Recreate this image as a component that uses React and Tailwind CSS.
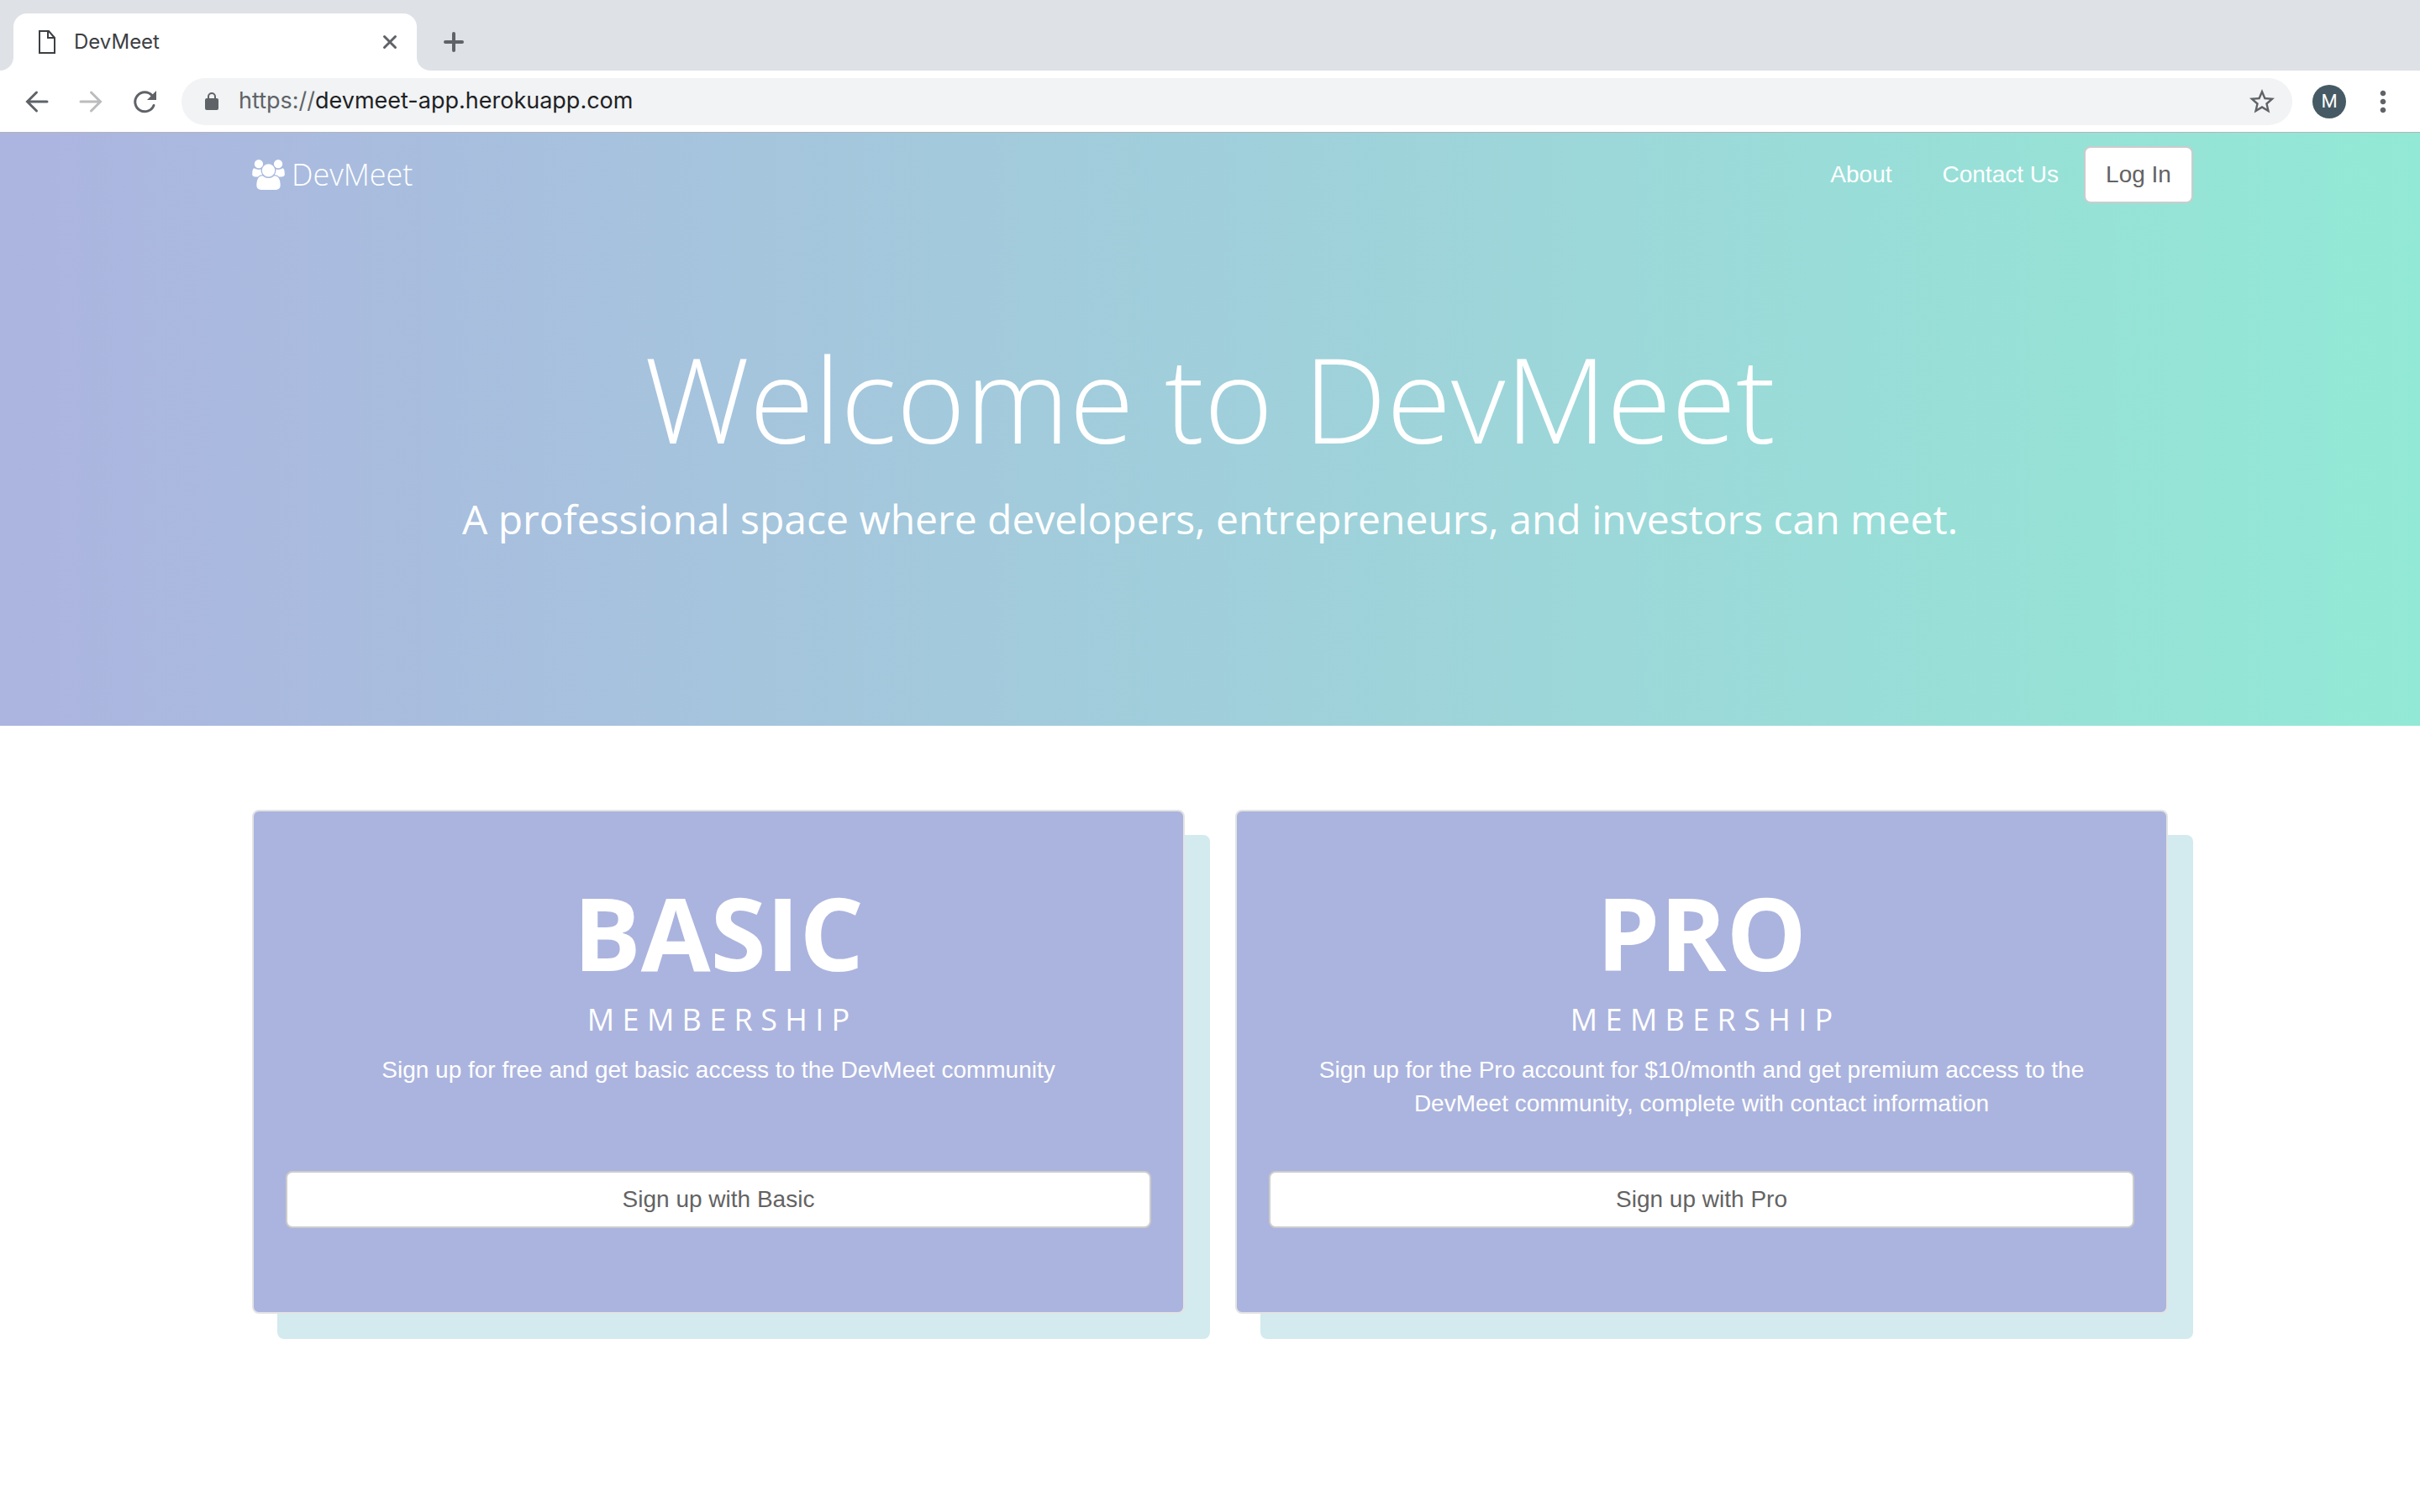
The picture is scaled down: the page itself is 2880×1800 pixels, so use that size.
import React from "react";
import { MdStarBorder, MdMoreVert } from "react-icons/md";

function StrokeIcon({ children, width = 4 }) {
  return (
    <svg viewBox="0 0 40 40" className="size-10" fill="none" stroke="currentColor" strokeWidth={width} strokeLinecap="round" aria-hidden="true">
      {children}
    </svg>
  );
}

function FileIcon() {
  return (
    <svg viewBox="0 0 20 28" className="h-7 w-5" fill="none" stroke="currentColor" strokeWidth="2" aria-hidden="true">
      <path d="M1 1h11l7 8v18H1zM11 1v8h8" />
    </svg>
  );
}

function LockIcon() {
  return (
    <svg viewBox="0 0 24 24" className="size-6" aria-hidden="true">
      <rect x="4" y="8" width="16" height="14" rx="2" fill="currentColor" />
      <path d="M8 9V6a4 4 0 0 1 8 0v3" fill="none" stroke="currentColor" strokeWidth="2" />
    </svg>
  );
}

function UsersIcon() {
  return (
    <svg viewBox="0 0 1920 1792" className="h-9 w-[39px]" fill="currentColor" aria-hidden="true">
      <path d="M593 896q-162 5-265 128h-134q-82 0-138-40.500t-56-118.500q0-353 124-353 6 0 43.500 21t97.500 42.500 119 21.500q67 0 133-23-5 37-5 66 0 139 81 256zm1071 637q0 120-73 189.500t-194 69.500h-874q-121 0-194-69.500t-73-189.500q0-53 3.500-103.500t14-109 26.500-108.500 43-97.500 62-81 85.500-53.500 111.500-20q10 0 43 21.500t73 48 107 48 135 21.500 135-21.500 107-48 73-48 43-21.500q61 0 111.500 20t85.500 53.500 62 81 43 97.500 26.500 108.500 14 109 3.500 103.500zm-1024-1277q0 106-75 181t-181 75-181-75-75-181 75-181 181-75 181 75 75 181zm704 384q0 159-112.500 271.500t-271.500 112.500-271.500-112.500-112.500-271.500 112.500-271.500 271.500-112.500 271.500 112.500 112.500 271.500zm576 225q0 78-56 118.500t-138 40.500h-134q-103-123-265-128 81-117 81-256 0-29-5-66 66 23 133 23 59 0 119-21.500t97.500-42.500 43.500-21q124 0 124 353zm-128-609q0 106-75 181t-181 75-181-75-75-181 75-181 181-75 181 75 75 181z" />
    </svg>
  );
}

function TabStrip() {
  return (
    <div className="flex h-[84px] items-end bg-[#dee1e6]">
      <div className="h-4 w-4 bg-white"><div className="h-4 w-4 rounded-br-2xl bg-[#dee1e6]" /></div>
      <div className="flex h-[68px] w-[480px] items-center rounded-t-2xl bg-white pr-3 pl-[30px] text-[#3c4043]">
        <FileIcon />
        <span className="ml-[22px] flex-1 text-2xl">DevMeet</span>
        <button type="button" aria-label="Close tab" className="text-[#5f6368]">
          <StrokeIcon width={3}><path d="M13.500 13.500l13 13M26.500 13.500l-13 13" /></StrokeIcon>
        </button>
      </div>
      <div className="h-4 w-4 bg-white"><div className="h-4 w-4 rounded-bl-2xl bg-[#dee1e6]" /></div>
      <button type="button" aria-label="New tab" className="mb-[14px] ml-2 text-[#5f6368]">
        <StrokeIcon><path d="M20 10v20M10 20h20" /></StrokeIcon>
      </button>
    </div>
  );
}

function Toolbar() {
  return (
    <div className="flex h-[74px] items-center border-b border-[#b6b4b6] bg-white px-6 text-[#5f6368]">
      <button type="button" aria-label="Back">
        <StrokeIcon width={3}><path d="M32 20H9M19.500 9L8.500 20l11 11" /></StrokeIcon>
      </button>
      <button type="button" aria-label="Forward" className="ml-6 text-[#babcbe]">
        <StrokeIcon width={3}><path d="M8 20h23M20.500 9l11 11-11 11" /></StrokeIcon>
      </button>
      <button type="button" aria-label="Reload" className="ml-6">
        <StrokeIcon width={3}>
          <path d="M31 24.500A11.500 11.500 0 1 1 29 12.800" />
          <path d="M34 7v11H23z" fill="currentColor" stroke="none" />
        </StrokeIcon>
      </button>
      <div className="ml-6 flex h-14 flex-1 items-center rounded-full bg-[#f1f3f4] pr-[18px] pl-6">
        <LockIcon />
        <p className="ml-5 flex-1 text-[27px]">https://<span className="text-[#202124]">devmeet-app.herokuapp.com</span></p>
        <button type="button" aria-label="Bookmark this page"><MdStarBorder className="size-9" /></button>
      </div>
      <button type="button" aria-label="Profile" className="ml-6 size-10 rounded-full bg-[#455a64] font-[Roboto,sans-serif] text-[22px] text-white">M</button>
      <button type="button" aria-label="Menu" className="ml-6"><MdMoreVert className="size-10" /></button>
    </div>
  );
}

const button = "h-[68px] rounded-lg border-2 border-[#cccccc] bg-white font-['Liberation_Sans',sans-serif] text-[28px] text-[#636363]";

function Header() {
  return (
    <header className="bg-linear-to-r from-[#acb4e0] via-[#a0cfdb] to-[#92e9d5] pb-[202px] text-white">
      <nav className="mx-auto flex h-[100px] max-w-[2340px] items-center pl-[30px]">
        <a href="#" className="flex items-center gap-2 font-['Open_Sans',sans-serif] text-4xl font-light"><UsersIcon />DevMeet</a>
        <div className="ml-auto flex items-center text-[28px]">
          <a href="#about">About</a>
          <a href="#contact" className="mr-[30px] ml-15">Contact Us</a>
          <button type="button" className={button + " w-[130px]"}>Log In</button>
        </div>
      </nav>
      <div className="mt-[116px] text-center font-['Open_Sans',sans-serif]">
        <h1 className="text-[140px] leading-[200px] font-light">Welcome to DevMeet</h1>
        <p className="text-5xl leading-[88px]">A professional space where developers, entrepreneurs, and investors can meet.</p>
      </div>
    </header>
  );
}

function Plan({ name, text }) {
  return (
    <section className="mr-[30px] flex flex-1 flex-col rounded-lg border-2 border-[#e3e3e3] bg-[#abb4de] px-[38px] pt-[72px] pb-[100px] text-center text-white shadow-[30px_30px_0_#d3eaef]">
      <h2 className="font-['Open_Sans',sans-serif] text-[120px] leading-[144px] font-bold">{name}</h2>
      <h3 className="mb-2 font-['Open_Sans',sans-serif] text-4xl leading-[64px]">M E M B E R S H I P</h3>
      <p className="mx-auto mb-[60px] max-w-[980px] flex-1 text-[28px] leading-10">{text}</p>
      <button type="button" className={button + " w-full"}>Sign up with {name[0] + name.slice(1).toLowerCase()}</button>
    </section>
  );
}

export default function App() {
  return (
    <div className="min-h-screen bg-white font-['Liberation_Sans',sans-serif]">
      <div className="font-[Inter,sans-serif]"><TabStrip /><Toolbar /></div>
      <Header />
      <main className="mx-auto mt-[100px] flex max-w-[2340px] gap-[30px] pl-[30px]">
        <Plan name="BASIC" text="Sign up for free and get basic access to the DevMeet community" />
        <Plan name="PRO" text="Sign up for the Pro account for $10/month and get premium access to the DevMeet community, complete with contact information" />
      </main>
    </div>
  );
}
